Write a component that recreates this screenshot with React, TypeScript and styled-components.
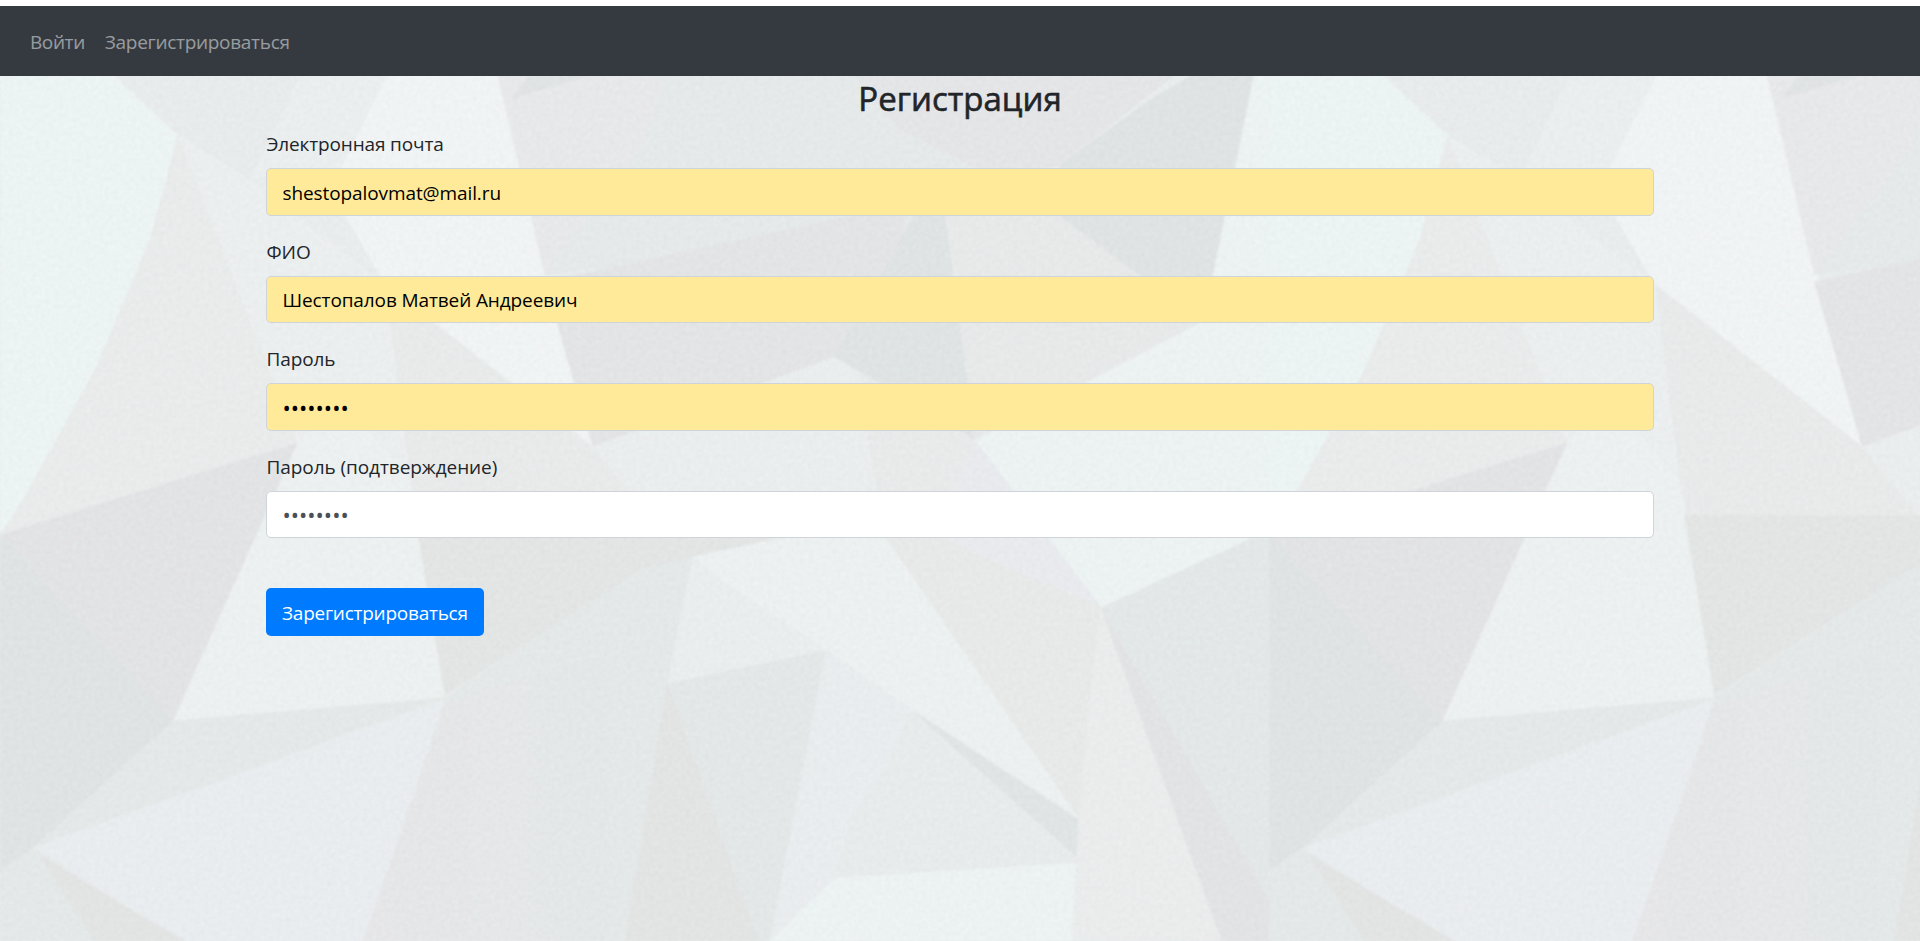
import React from "react";
import styled, { createGlobalStyle } from "styled-components";

const GlobalStyle = createGlobalStyle`
  *, *::before, *::after { box-sizing: border-box; }
  html, body { margin: 0; padding: 0; background: #fff; }
  body {
    font-family: "Open Sans", "Noto Sans", sans-serif;
    font-size: 19px;
    line-height: 30px;
    color: #212529;
    overflow: hidden;
  }
`;

const Page = styled.div`
  position: relative;
  display: flex;
  flex-direction: column;
  height: 941px;
  padding-top: 6px;
  overflow: hidden;
  isolation: isolate;
`;

const Backdrop = styled.svg`
  position: absolute;
  top: 6px;
  left: 0;
  z-index: -1;
`;

const Navbar = styled.nav`
  display: flex;
  align-items: center;
  gap: 20px;
  height: 70px;
  padding: 2px 30px 0;
  background: #343a40;
`;

const NavLink = styled.a<{ $spacing: number }>`
  color: rgba(255, 255, 255, 0.5);
  text-decoration: none;
  letter-spacing: ${(p) => p.$spacing}px;
`;

const Container = styled.main`
  width: 1388px;
  margin: 0 auto;
`;

const Title = styled.h3`
  margin: 0;
  padding: 2px 0 8px;
  font-size: 33px;
  font-weight: 500;
  line-height: 42px;
  text-align: center;
  letter-spacing: 0;
  -webkit-text-stroke: 0.6px #212529;
`;

const Form = styled.form`
  display: flex;
  flex-direction: column;
  align-items: flex-start;
`;

const Field = styled.div`
  display: flex;
  flex-direction: column;
  width: 100%;
  margin-bottom: 20px;
`;

const Label = styled.label<{ $spacing: number }>`
  padding: 1px 0 9px 0.5px;
  letter-spacing: ${(p) => p.$spacing}px;
`;

const Input = styled.input<{ $filled: boolean; $spacing: number }>`
  width: 100%;
  height: 47.5px;
  padding: 2px 15.5px 0;
  border: 1px solid #ced4da;
  border-radius: 5px;
  outline: none;
  background: ${(p) => (p.$filled ? "#ffea99" : "#fff")};
  color: ${(p) => (p.$filled ? "#000" : "#495057")};
  font: inherit;
  letter-spacing: ${(p) => p.$spacing}px;

  &[type="password"] {
    padding-top: 0;
    font-size: 22px;
  }
`;

const Submit = styled.button`
  height: 47.5px;
  margin-top: 30px;
  padding: 2px 16px 0;
  border: 0;
  border-radius: 5px;
  background: #007bff;
  color: #fff;
  font: inherit;
  letter-spacing: -0.25px;
`;

const TILE = 1269.5;

/* Folded-paper facets of one tile: fill and outline, painted in order. */
const facets: [string, string][] = [
  ["#e9ecec", "0,0 1270,0 1270,941 0,941"],
  ["#ecf3f3", "0,0 95,0 115,76 178,135 150,240 95,370 20,505 0,535"],
  ["#e8ebeb", "95,0 420,0 400,100 340,175 250,180 178,135 115,76"],
  ["#eaeeee", "250,180 300,76 420,76 358,165"],
  ["#e9ebeb", "178,135 150,240 95,370 20,505 0,535 298,443 262,300"],
  ["#ebeeef", "178,135 250,180 386,285 415,515 298,443 250,320"],
  ["#f0f3f4", "425,0 480,0 497,76 593,447 386,285 330,190"],
  ["#e8eaea", "386,285 593,447 651,518 415,515"],
  ["#e7e8ea", "480,0 690,0 640,200 545,275"],
  ["#e0e3e4", "530,76 595,74 512,98"],
  ["#e5e9e9", "690,0 850,0 1000,200 900,232 545,275 640,150"],
  ["#e4e5e7", "790,0 1269,0 1060,165 1000,180 900,130"],
  ["#dfe3e3", "1269,30 1213,276 1200,323 1140,276 1058,215 1060,165 1150,100"],
  ["#e3e4e6", "545,282 860,214 905,200 900,280 834,357 593,447"],
  ["#dfe3e4", "940,170 945,215 975,440 834,357 855,323 905,232"],
  ["#e7e9e9", "945,190 1035,190 1058,215 1140,276 1200,323 1087,382 975,440"],
  ["#ecf2f2", "1269,0 1254,76 1213,276 1200,323 1087,382 975,440 1101,608 1252,538 1269.5,535 1270,0"],
  ["#eaedee", "834,357 975,440 935,538 885,538 693,557 651,518 593,447"],
  ["#e8eaea", "860,372 975,440 935,538 885,538 870,450"],
  ["#e8eaed", "975,440 1101,608 930,536"],
  ["#e2e3e5", "0,535 298,443 173,721"],
  ["#dfe3e3", "0,535 173,721 33,848 0,870"],
  ["#ecf0f0", "298,443 340,400 410,480 420,538 445,698 173,721"],
  ["#e2e5e4", "415,515 651,516 790,536 693,557 640,570 445,695"],
  ["#e4e8e8", "445,698 640,570 693,557 668,683 625,941 363,941"],
  ["#e4e8e8", "173,721 445,698 33,848"],
  ["#e9ecef", "33,848 445,700 415,790 363,941 180,941"],
  ["#e4e8e8", "0,870 33,848 180,941 0,941"],
  ["#e2e4e3", "40,856 185,941 95,941"],
  ["#e2e4e3", "668,683 758,941 625,941 650,790"],
  ["#e3e7e7", "668,683 826,650 770,941 758,941"],
  ["#ecf0f0", "693,557 790,536 885,536 1079,818 915,712 826,650 668,683"],
  ["#e9edee", "725,583 826,650 668,683 693,557"],
  ["#e9ecee", "826,650 912,710 835,878 770,941"],
  ["#e7ebeb", "912,710 1079,863 835,878 850,820 890,760"],
  ["#e0e4e4", "912,710 1079,820 1080,860"],
  ["#ecf2f2", "835,878 1079,863 1072,941 770,941"],
  ["#e7e9e8", "885,536 935,536 1101,608 1090,700 1079,818"],
  ["#eaecec", "1101,608 1222,941 1072,941 1079,818 1090,700"],
  ["#e2e3e5", "1101,608 1269.5,900 1269.5,941 1222,941"],
  ["#e3e7e8", "1101,608 1252,538 1269.5,536 1269.5,900"],
];

const FacetBackdrop = () => (
  <Backdrop width="1920" height="935" viewBox="0 6 1920 935" aria-hidden="true">
    <defs>
      <filter id="paper" x="0" y="0" width="1920" height="941" filterUnits="userSpaceOnUse" colorInterpolationFilters="sRGB">
        <feGaussianBlur in="SourceGraphic" stdDeviation="1.2" result="soft" />
        <feTurbulence type="fractalNoise" baseFrequency="0.22" numOctaves="2" seed="4" />
        <feColorMatrix values="0.03 0.015 0 0 0  0.03 0 0.015 0 0  0.03 0.008 0.007 0 0  0 0 0 0 1" result="grain" />
        <feComposite in="soft" in2="grain" operator="arithmetic" k2="1" k3="1" k4="-0.0225" />
      </filter>
      <linearGradient id="shade" x1="0" y1="0" x2="1" y2="0">
        <stop offset="0" stopColor="#e6e6e8" />
        <stop offset="1" stopColor="#e6e6e8" stopOpacity="0" />
      </linearGradient>
      <g id="tile">
        {facets.map(([fill, points], i) => (
          <polygon key={i} fill={fill} stroke={fill} strokeWidth="0.6" points={points} />
        ))}
        <polygon fill="url(#shade)" points="443,705 640,640 625,941 363,941 415,790" />
      </g>
    </defs>
    <g filter="url(#paper)">
      <rect x="-10" y="-10" width="1940" height="961" fill="#e9ecec" />
      <use href="#tile" />
      <use href="#tile" x={TILE} />
    </g>
  </Backdrop>
);

const fields = [
  { id: "email", label: "Электронная почта", type: "email", value: "shestopalovmat@mail.ru", filled: true, ls: -0.15, vs: -0.1 },
  { id: "name", label: "ФИО", type: "text", value: "Шестопалов Матвей Андреевич", filled: true, ls: -0.1, vs: -0.11 },
  { id: "password", label: "Пароль", type: "password", value: "12345678", filled: true, ls: -0.1, vs: 0 },
  { id: "confirm", label: "Пароль (подтверждение)", type: "password", value: "12345678", filled: false, ls: -0.07, vs: 0 },
];

export default function App() {
  return (
    <Page>
      <GlobalStyle />
      <FacetBackdrop />
      <Navbar>
        <NavLink href="#" $spacing={-0.4}>Войти</NavLink>
        <NavLink href="#" $spacing={-0.3}>Зарегистрироваться</NavLink>
      </Navbar>
      <Container>
        <Title>Регистрация</Title>
        <Form>
          {fields.map((f) => (
            <Field key={f.id}>
              <Label htmlFor={f.id} $spacing={f.ls}>{f.label}</Label>
              <Input id={f.id} type={f.type} defaultValue={f.value} $filled={f.filled} $spacing={f.vs} />
            </Field>
          ))}
          <Submit type="button">Зарегистрироваться</Submit>
        </Form>
      </Container>
    </Page>
  );
}
